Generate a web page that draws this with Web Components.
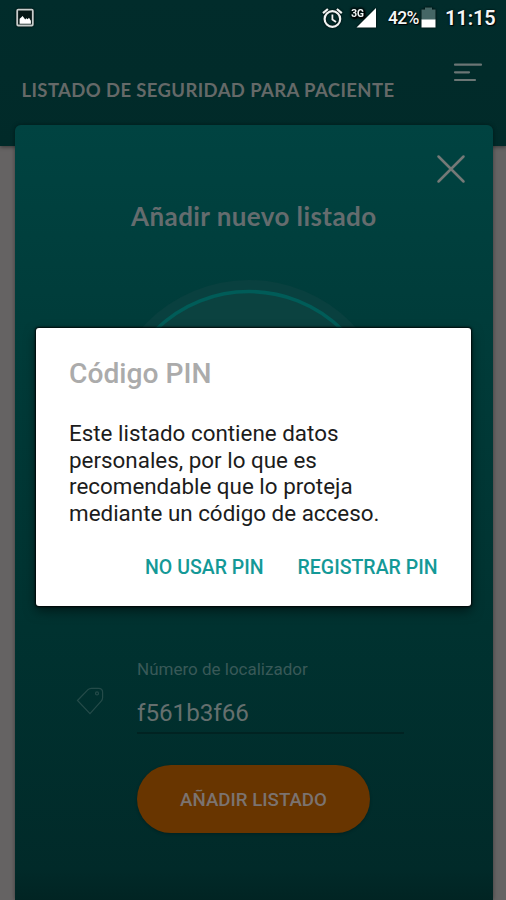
<!DOCTYPE html>
<html lang="es">
<head>
<meta charset="utf-8">
<title>Listado de seguridad</title>
<style>
  body {
    margin: 0;
    width: 506px;
    height: 900px;
    overflow: hidden;
    font-family: Roboto, sans-serif;
  }
</style>
</head>
<body>
<app-screen>
  <status-bar slot="status" battery="42%" time="11:15"></status-bar>
  <app-header slot="header">LISTADO DE SEGURIDAD PARA PACIENTE</app-header>
  <list-card heading="Añadir nuevo listado">
    <text-field label="Número de localizador" value="f561b3f66"></text-field>
    <pill-button>AÑADIR LISTADO</pill-button>
  </list-card>
  <alert-dialog slot="dialog">
    <span slot="title">Código PIN</span>
    Este listado contiene datos<br>personales, por lo que es<br>recomendable que lo proteja<br>mediante un código de acceso.
    <dialog-action slot="actions">NO USAR PIN</dialog-action>
    <dialog-action slot="actions">REGISTRAR PIN</dialog-action>
  </alert-dialog>
</app-screen>

<script>
class AppScreen extends HTMLElement {
  constructor() {
    super();
    this.attachShadow({ mode: "open" });
    this.shadowRoot.innerHTML = `
      <style>
        :host {
          display: block;
          position: relative;
          width: 506px;
          height: 900px;
          overflow: hidden;
          background: #656363;
        }
        .top {
          height: 146px;
          background: linear-gradient(#012c2b, #012a29);
          box-shadow: 0 1px 4px rgba(0, 0, 0, 0.45);
        }
        main {
          display: block;
          position: relative;
          margin: -21px 13px 0 15px;
        }
        .layer {
          position: absolute;
          inset: 328px 35px auto 36px;
        }
      </style>
      <div class="top">
        <slot name="status"></slot>
        <slot name="header"></slot>
      </div>
      <main><slot></slot></main>
      <div class="layer"><slot name="dialog"></slot></div>
    `;
  }
}

class StatusBar extends HTMLElement {
  constructor() {
    super();
    this.attachShadow({ mode: "open" });
  }

  connectedCallback() {
    this.shadowRoot.innerHTML = `
      <style>
        :host {
          display: flex;
          align-items: center;
          height: 36px;
          padding: 0 11px 0 15px;
          color: #f4f6f6;
          text-shadow: 0 0 2px #000, 1px 1px 1px #000;
        }
        svg { display: block; filter: drop-shadow(0 0 1px #000); }
        .spacer { flex: 1; }
        .signal { margin: 0 11px 0 6px; }
        .percent { width: 32px; font-size: 17.5px; font-weight: 500; letter-spacing: -0.7px; white-space: nowrap; }
        .battery { margin: 0 9px 0 1px; }
        .time { width: 50px; font-size: 20px; font-weight: 600; letter-spacing: -0.1px; white-space: nowrap; }
      </style>
      <svg width="20" height="20" viewBox="0 0 20 20">
        <rect x="2.2" y="1.7" width="15.6" height="15.8" rx="1" fill="#051615" stroke="#c8cdcc" stroke-width="1.8"/>
        <path d="M4.6 15.7v-5l1.5-1.2 1.5-1.4 2.6 3.4 1.2-1.2 1.2 1 1.4-1.5 1.9 3v2.9z" fill="#fff"/>
      </svg>
      <span class="spacer"></span>
      <svg width="22" height="22" viewBox="0 0 22 22" fill="none" stroke="#f0f3f2">
        <circle cx="10.4" cy="12" r="7.8" stroke-width="2.2"/>
        <path d="M10.4 7.5v5l3.6 2.6" stroke-width="1.8"/>
        <path d="M1 6.2 5.9 2M14.9 2l4.9 4.2" stroke-width="2.2"/>
      </svg>
      <svg class="signal" width="27" height="22" viewBox="0 0 27 22">
        <path d="M26 1v19.6H6.5z" fill="#fff"/>
        <text x="1.2" y="9.6" font-family="Roboto" font-size="11.5" font-weight="700" fill="#f3f5f5" stroke="#012b2a" stroke-width="1.6" paint-order="stroke" textLength="12.8" lengthAdjust="spacingAndGlyphs">3G</text>
      </svg>
      <span class="percent">${this.getAttribute("battery")}</span>
      <svg class="battery" width="15" height="22" viewBox="0 0 15 22">
        <path d="M4 .5h7v2h3.5V13H.5V2.5H4z" fill="#456665"/>
        <path d="M.5 12.5h14v8H.5z" fill="#fff"/>
      </svg>
      <span class="time">${this.getAttribute("time")}</span>
    `;
  }
}

class AppHeader extends HTMLElement {
  constructor() {
    super();
    this.attachShadow({ mode: "open" });
    this.shadowRoot.innerHTML = `
      <style>
        :host {
          display: flex;
          justify-content: space-between;
          padding: 26px 23px 0 21.5px;
          color: #656968;
          font: 700 18.5px/22px Lato, sans-serif;
        }
        .title { margin-top: 17px; white-space: nowrap; letter-spacing: 0.38px; }
        svg { display: block; }
      </style>
      <span class="title"><slot></slot></span>
      <svg width="30" height="22" viewBox="0 0 30 22" stroke="#6b7675" stroke-width="2.2" stroke-linecap="round">
        <path d="M2 2.7h26M2 10.3h14M2 18h20"/>
      </svg>
    `;
  }
}

class ListCard extends HTMLElement {
  constructor() {
    super();
    this.attachShadow({ mode: "open" });
  }

  connectedCallback() {
    this.shadowRoot.innerHTML = `
      <style>
        :host {
          display: flex;
          flex-direction: column;
          box-sizing: border-box;
          height: 775px;
          padding-top: 29px;
          border-radius: 6px 6px 0 0;
          background: linear-gradient(#004341, #003c3a 25%, #003230 65%, #012a29 96%, #012423);
          box-shadow: 0 0 4px rgba(0, 0, 0, 0.4);
        }
        .close { display: block; align-self: flex-end; margin-right: 27px; }
        h2 {
          margin: 16px 0 0;
          padding-left: 116px;
          font: 700 26px/32px Lato, sans-serif;
          letter-spacing: 0.42px;
          color: #656c6e;
          white-space: nowrap;
        }
        .avatar { display: block; margin: 46px 0 0 88px; }
      </style>
      <svg class="close" width="30" height="30" viewBox="0 0 30 30" stroke="#757977" stroke-width="2.5" stroke-linecap="round">
        <path d="M2.5 2.5l25 25M27.5 2.5l-25 25"/>
      </svg>
      <h2>${this.getAttribute("heading")}</h2>
      <svg class="avatar" width="292" height="292" viewBox="0 0 292 292">
        <circle cx="146" cy="146" r="144" fill="#09403f"/>
        <circle cx="146" cy="146" r="132.5" fill="#0b4240" stroke="#005c58" stroke-width="3.6"/>
      </svg>
      <slot></slot>
    `;
  }
}

class TextField extends HTMLElement {
  constructor() {
    super();
    this.attachShadow({ mode: "open" });
  }

  connectedCallback() {
    this.shadowRoot.innerHTML = `
      <style>
        :host {
          display: flex;
          gap: 33px;
          margin: 88px 0 0 61px;
        }
        svg { display: block; margin-top: 28px; }
        .field { width: 267px; }
        label { display: block; font-size: 17px; line-height: 22px; color: #395958; white-space: nowrap; }
        .value {
          box-sizing: border-box;
          height: 54px;
          padding-top: 16px;
          border-bottom: 2px solid #012322;
          font-size: 24.2px;
          line-height: 34px;
          color: #656f6e;
          white-space: nowrap;
        }
      </style>
      <svg width="28" height="30" viewBox="0 0 28 30" fill="none" stroke="#244b49" stroke-width="1.2">
        <path d="M1.5 14.5 12 3.7q1.4-1.4 3.4-1.4h7.2q4 0 4 4v5.4q0 2-1.4 3.4L14 27.7z"/>
        <circle cx="21" cy="7.4" r="1.5"/>
      </svg>
      <div class="field">
        <label>${this.getAttribute("label")}</label>
        <div class="value">${this.getAttribute("value")}</div>
      </div>
    `;
  }
}

class PillButton extends HTMLElement {
  constructor() {
    super();
    this.attachShadow({ mode: "open" });
    this.shadowRoot.innerHTML = `
      <style>
        :host { display: block; margin: 31px 0 0 122px; }
        button {
          width: 233px;
          height: 68px;
          padding: 2px 0 0;
          border: 0;
          border-radius: 34px;
          background: #683500;
          box-shadow: 0 1px 3px rgba(0, 0, 0, 0.25);
          color: #7b7370;
          font: 500 18.7px Roboto, sans-serif;
          white-space: nowrap;
        }
      </style>
      <button><slot></slot></button>
    `;
  }
}

class AlertDialog extends HTMLElement {
  constructor() {
    super();
    this.attachShadow({ mode: "open" });
    this.shadowRoot.innerHTML = `
      <style>
        :host {
          display: block;
          box-sizing: border-box;
          height: 278px;
          padding: 30px 33px 0 33px;
          border-radius: 3px;
          background: #fff;
          box-shadow: 0 0 2px 1px rgba(0, 0, 0, 0.85), 0 5px 12px rgba(0, 0, 0, 0.5);
        }
        .title { font-size: 28.2px; font-weight: 500; line-height: 32px; color: #ababab; }
        .text { margin-top: 30px; font-size: 22.4px; line-height: 26.7px; color: #1c1c1c; white-space: nowrap; }
        .actions { display: flex; justify-content: flex-end; gap: 34px; margin: 29px 0.5px 0 0; }
      </style>
      <div class="title"><slot name="title"></slot></div>
      <div class="text"><slot></slot></div>
      <div class="actions"><slot name="actions"></slot></div>
    `;
  }
}

class DialogAction extends HTMLElement {
  constructor() {
    super();
    this.attachShadow({ mode: "open" });
    this.shadowRoot.innerHTML = `
      <style>
        :host {
          display: block;
          font-size: 19.5px;
          font-weight: 500;
          line-height: 24px;
          color: #149997;
          white-space: nowrap;
        }
      </style>
      <slot></slot>
    `;
  }
}

customElements.define("app-screen", AppScreen);
customElements.define("status-bar", StatusBar);
customElements.define("app-header", AppHeader);
customElements.define("list-card", ListCard);
customElements.define("text-field", TextField);
customElements.define("pill-button", PillButton);
customElements.define("alert-dialog", AlertDialog);
customElements.define("dialog-action", DialogAction);
</script>
</body>
</html>
